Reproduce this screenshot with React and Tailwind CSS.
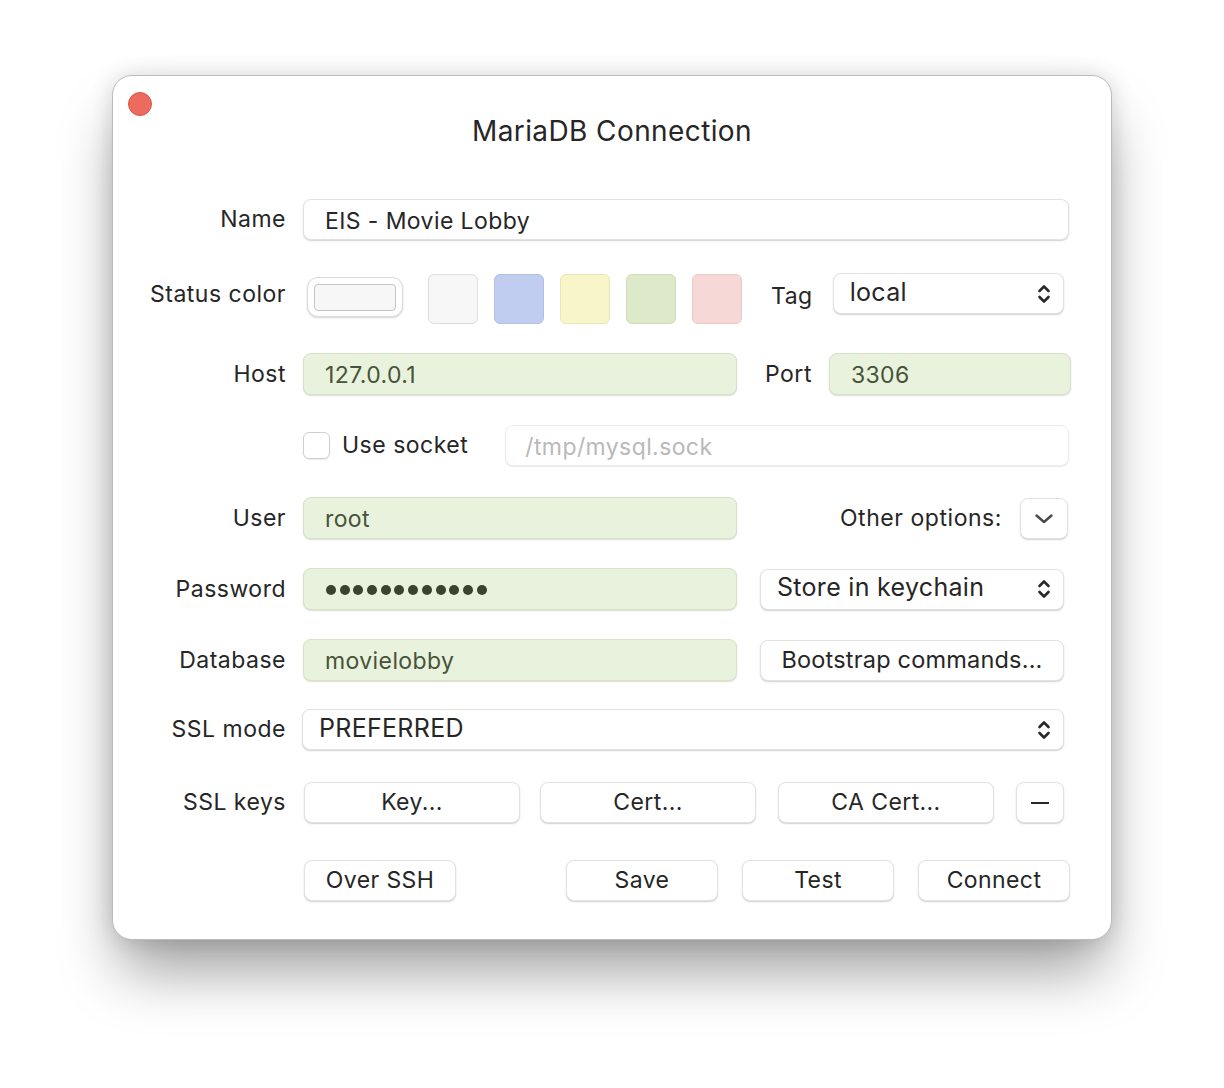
import React from "react";

const font = { fontFamily: "Inter, 'Noto Sans', 'Liberation Sans', sans-serif" };

function UpDown() {
  return (
    <svg width="14" height="22" viewBox="0 0 14 22" fill="none" stroke="#2a2a2a" strokeWidth="2.6" strokeLinecap="round" strokeLinejoin="round">
      <path d="M2.5 8 L7 3.5 L11.5 8" />
      <path d="M2.5 14 L7 18.5 L11.5 14" />
    </svg>
  );
}

function Label({ children, className = "" }) {
  return (
    <div className={`w-[173px] shrink-0 text-right text-[23px] text-[#262626] tracking-[0.5px] ${className}`}>
      {children}
    </div>
  );
}

const whiteBox =
  "bg-white border border-[#e2e2e2] rounded-[8px] shadow-[0_1px_1.5px_rgba(0,0,0,0.18)]";
const greenBox =
  "bg-[#e9f2dc] border border-[#d6e3c4] rounded-[8px] shadow-[0_1px_1.5px_rgba(0,0,0,0.14)]";

function Button({ className, children }) {
  return (
    <div className={`${whiteBox} flex items-center justify-center text-[23px] tracking-[0.4px] text-[#262626] h-[41px] ${className}`}>
      {children}
    </div>
  );
}

function Select({ className, children }) {
  return (
    <div className={`${whiteBox} flex items-center justify-between pl-[16px] pr-[12px] text-[25px] tracking-[0.3px] text-[#262626] h-[41px] ${className}`}>
      <span className="-mt-[2px]">{children}</span>
      <UpDown />
    </div>
  );
}

export default function App() {
  return (
    <div className="w-[1224px] h-[1088px] bg-white flex justify-center pt-[75px]" style={font}>
      <div className="relative w-[1000px] h-[865px] bg-white rounded-[20px] border border-[#bdbdbd] shadow-[0_38px_60px_-8px_rgba(0,0,0,0.38),0_0_22px_rgba(0,0,0,0.14)] flex flex-col">
        <div className="absolute left-[15px] top-[16px] w-[24px] h-[24px] rounded-full bg-[#ed6a5e] border border-[#d7574a]" />

        <div className="h-[123px] pt-[39px] text-center text-[28px] tracking-[0.4px] leading-[32px] text-[#262626]">
          MariaDB Connection
        </div>

        {/* Name */}
        <div className="flex items-center h-[41px]">
          <Label>Name</Label>
          <div className={`${whiteBox} ml-[17px] w-[766px] h-[41px] flex items-center pl-[21px] pt-[3px] text-[23px] tracking-[0.4px] text-[#262626]`}>
            EIS - Movie Lobby
          </div>
        </div>

        {/* Status color */}
        <div className="flex items-start h-[50px] mt-[34px]">
          <Label className="mt-[3px]">Status color</Label>
          <div className="ml-[21px] mt-[3px] w-[96px] h-[40px] rounded-[11px] bg-white border border-[#dcdcdc] shadow-[0_1px_2px_rgba(0,0,0,0.18)] flex items-center justify-center">
            <div className="w-[82px] h-[27px] rounded-[4px] bg-[#f7f7f7] border border-[#c4c4c4]" />
          </div>
          <div className="ml-[25px] flex gap-[16px]">
            <div className="w-[50px] h-[50px] rounded-[6px] bg-[#f7f7f7] border border-[#dedede]" />
            <div className="w-[50px] h-[50px] rounded-[6px] bg-[#c0cdf0] border border-[#b2c0e6]" />
            <div className="w-[50px] h-[50px] rounded-[6px] bg-[#f8f6c8] border border-[#e9e6b6]" />
            <div className="w-[50px] h-[50px] rounded-[6px] bg-[#dde9c8] border border-[#cfdcb9]" />
            <div className="w-[50px] h-[50px] rounded-[6px] bg-[#f6d8d6] border border-[#ebc9c6]" />
          </div>
          <div className="ml-[29px] mt-[5px] text-[23px] tracking-[0.5px] text-[#262626]">Tag</div>
          <Select className="ml-[20px] w-[231px] -mt-[1px]">local</Select>
        </div>

        {/* Host */}
        <div className="flex items-center h-[42px] mt-[29px]">
          <Label>Host</Label>
          <div className={`${greenBox} ml-[17px] w-[434px] h-[42px] flex items-center pl-[21px] pt-[3px] text-[23px] tracking-[0.4px] text-[#47533a]`}>
            127.0.0.1
          </div>
          <div className="ml-[28px] text-[23px] tracking-[0.5px] text-[#262626]">Port</div>
          <div className={`${greenBox} ml-[17px] w-[242px] h-[42px] flex items-center pl-[21px] pt-[3px] text-[23px] tracking-[0.4px] text-[#47533a]`}>
            3306
          </div>
        </div>

        {/* Socket */}
        <div className="flex items-center h-[41px] mt-[30px]">
          <div className="w-[173px] shrink-0" />
          <div className="ml-[17px] w-[27px] h-[27px] rounded-[6px] bg-white border border-[#cfcfcf] shadow-[0_1px_1px_rgba(0,0,0,0.08)]" />
          <div className="ml-[12px] text-[23px] tracking-[0.5px] text-[#262626]">Use socket</div>
          <div className="ml-[37px] w-[564px] h-[41px] bg-white border border-[#ececec] rounded-[8px] shadow-[0_1px_1px_rgba(0,0,0,0.08)] flex items-center pl-[19px] pt-[3px] text-[23px] tracking-[0.4px] text-[#b9b9b9]">
            /tmp/mysql.sock
          </div>
        </div>

        {/* User */}
        <div className="flex items-center h-[42px] mt-[31px]">
          <Label>User</Label>
          <div className={`${greenBox} ml-[17px] w-[434px] h-[42px] flex items-center pl-[21px] pt-[3px] text-[23px] tracking-[0.4px] text-[#47533a]`}>
            root
          </div>
          <div className="flex-1 text-right text-[23px] tracking-[0.55px] text-[#262626] pr-[18px]">Other options:</div>
          <div className={`${whiteBox} w-[48px] h-[41px] mr-[43px] flex items-center justify-center`}>
            <svg width="22" height="13" viewBox="0 0 22 13" fill="none" stroke="#4a4a4a" strokeWidth="2.4" strokeLinecap="round" strokeLinejoin="round">
              <path d="M3.5 3.5 L11 10 L18.5 3.5" />
            </svg>
          </div>
        </div>

        {/* Password */}
        <div className="flex items-center h-[42px] mt-[29px]">
          <Label>Password</Label>
          <div className={`${greenBox} ml-[17px] w-[434px] h-[42px] flex items-center pl-[22px] pt-[2px] gap-[3.7px]`}>
            {Array.from({ length: 12 }).map((_, i) => (
              <div key={i} className="w-[10px] h-[10px] rounded-full bg-[#3b4330]" />
            ))}
          </div>
          <Select className="ml-[23px] w-[304px]">Store in keychain</Select>
        </div>

        {/* Database */}
        <div className="flex items-center h-[42px] mt-[29px]">
          <Label>Database</Label>
          <div className={`${greenBox} ml-[17px] w-[434px] h-[42px] flex items-center pl-[21px] pt-[3px] text-[23px] tracking-[0.4px] text-[#47533a]`}>
            movielobby
          </div>
          <Button className="ml-[23px] w-[304px] !text-[23.5px] !tracking-[0.2px]">Bootstrap commands...</Button>
        </div>

        {/* SSL mode */}
        <div className="flex items-center h-[41px] mt-[28px]">
          <Label>SSL mode</Label>
          <Select className="ml-[16px] w-[762px]">PREFERRED</Select>
        </div>

        {/* SSL keys */}
        <div className="flex items-center h-[41px] mt-[32px]">
          <Label>SSL keys</Label>
          <Button className="ml-[18px] w-[216px]">Key...</Button>
          <Button className="ml-[20px] w-[216px]">Cert...</Button>
          <Button className="ml-[22px] w-[216px]">CA Cert...</Button>
          <Button className="ml-[22px] w-[48px]">
            <div className="w-[18px] h-[2px] bg-[#2a2a2a]" />
          </Button>
        </div>

        {/* Bottom */}
        <div className="flex items-center h-[41px] mt-[37px]">
          <div className="w-[173px] shrink-0" />
          <Button className="ml-[18px] w-[152px]">Over SSH</Button>
          <Button className="ml-[110px] w-[152px]">Save</Button>
          <Button className="ml-[24px] w-[152px]">Test</Button>
          <Button className="ml-[24px] w-[152px]">Connect</Button>
        </div>
      </div>
    </div>
  );
}
